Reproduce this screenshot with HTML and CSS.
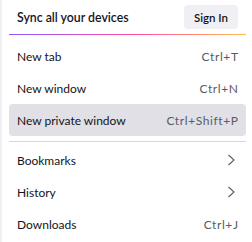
FILE: index.html
```html
<!DOCTYPE html>
<html>
<head>
<meta charset="utf-8">
<link rel="stylesheet" href="styles.css">
</head>
<body>
<div class="panel">
  <div class="header">
    <span class="title">Sync all your devices</span>
    <span class="btn">Sign In</span>
  </div>
  <div class="grad"></div>
  <div class="items">
    <div class="item"><span>New tab</span><span class="key">Ctrl+T</span></div>
    <div class="item"><span>New window</span><span class="key">Ctrl+N</span></div>
    <div class="item active"><span>New private window</span><span class="key">Ctrl+Shift+P</span></div>
  </div>
  <div class="sep"></div>
  <div class="items">
    <div class="item"><span>Bookmarks</span><svg class="chev" width="16" height="16" viewBox="0 0 16 16"><path d="M4.5 3 L10 8 L4.5 13" fill="none" stroke="#5b5b66" stroke-width="1.1"/></svg></div>
    <div class="item"><span>History</span><svg class="chev" width="16" height="16" viewBox="0 0 16 16"><path d="M4.5 3 L10 8 L4.5 13" fill="none" stroke="#5b5b66" stroke-width="1.1"/></svg></div>
    <div class="item"><span>Downloads</span><span class="key">Ctrl+J</span></div>
  </div>
</div>
</body>
</html>
```
FILE: styles.css
```css
html, body {
  margin: 0;
  padding: 0;
  background: #ffffff;
}
body {
  font-family: "Lato", "Liberation Sans", sans-serif;
  font-size: 12px;
  color: #15141a;
}
.panel {
  width: 252px;
  height: 242px;
  box-sizing: border-box;
  border-left: 2px solid #f0f0f4;
  padding: 0 6px 0 7px;
}
.header {
  display: flex;
  align-items: center;
  justify-content: space-between;
  padding: 5px 8px 5px 8px;
}
.title {
  font-weight: 600;
  font-size: 12.3px;
}
.btn {
  background: #f0f0f4;
  border-radius: 4px;
  height: 24px;
  width: 54px;
  display: flex;
  align-items: center;
  justify-content: center;
  font-weight: 600;
  font-size: 11.5px;
}
.grad {
  height: 1px;
  background: linear-gradient(90deg, #9059ff 0%, #ff4aa2 52%, #ffbd4f 100%);
  margin-bottom: 5px;
}
.item {
  height: 32px;
  display: flex;
  align-items: center;
  justify-content: space-between;
  padding: 0 8px;
  border-radius: 4px;
}
.item.active {
  background: #e0e0e6;
}
.key {
  color: #5b5b66;
  letter-spacing: 0.6px;
  margin-right: -0.6px;
}
.chev {
  margin-right: -2px;
}
.sep {
  height: 1px;
  background: #d7d7db;
  margin: 5px 0 2px;
}
```
